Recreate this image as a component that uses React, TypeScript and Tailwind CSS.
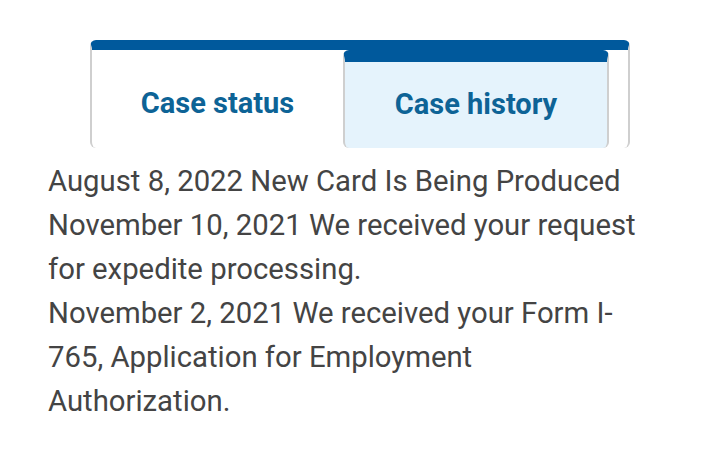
import React from "react";

export default function App() {
  const font = { fontFamily: '"Source Sans Pro", Roboto, "Liberation Sans", sans-serif' };
  return (
    <div className="w-[720px] h-[456px] bg-white" style={font}>
      <div className="pt-[40px] pl-[90px]">
        <div className="w-[540px] h-[108px] flex border-t-[10px] border-t-[#00599c] border-x-2 border-x-[#cfcfcf] rounded-[6px] bg-white">
          <div className="w-[251px] flex items-center justify-center pt-[10px] text-[29px] font-bold text-[#0d6396]">
            Case status
          </div>
          <div className="w-[266px] h-[98px] flex items-center justify-center bg-[#e5f3fc] border-t-[12px] border-t-[#00599c] border-x-2 border-x-[#cfcfcf] rounded-[6px] text-[29px] font-bold text-[#0d6396]">
            Case history
          </div>
        </div>
      </div>
      <div className="pl-[48px] pt-[11px] text-[29.3px] leading-[44px] text-[#444444] whitespace-nowrap">
        <p>August 8, 2022 New Card Is Being Produced</p>
        <p>
          November 10, 2021 We received your request
          <br />
          for expedite processing.
        </p>
        <p>
          November 2, 2021 We received your Form I-
          <br />
          765, Application for Employment
          <br />
          Authorization.
        </p>
      </div>
    </div>
  );
}
